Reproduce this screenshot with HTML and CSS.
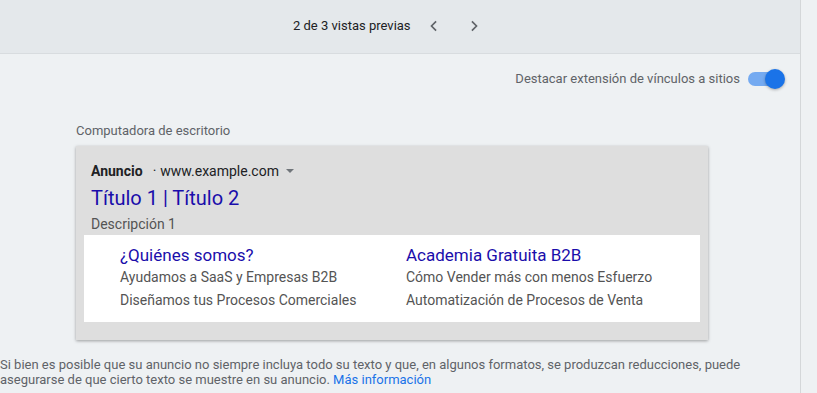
FILE: index.html
```html
<!DOCTYPE html>
<html lang="es">
<head>
  <meta charset="UTF-8" />
  <title>Vista previa del anuncio</title>
  <link rel="stylesheet" href="styles.css">
</head>
<body>
  <div class="main">
    <div class="topbar">
      <span class="pager-text">2 de 3 vistas previas</span>
      <button class="nav-btn" aria-label="Anterior">
        <svg width="20" height="20" viewBox="0 0 24 24"><path d="M14.5 6.5L9 12l5.5 5.5" fill="none" stroke="#5f6368" stroke-width="2"/></svg>
      </button>
      <button class="nav-btn" aria-label="Siguiente">
        <svg width="20" height="20" viewBox="0 0 24 24"><path d="M9.5 6.5L15 12l-5.5 5.5" fill="none" stroke="#5f6368" stroke-width="2"/></svg>
      </button>
    </div>

    <div class="toggle-row">
      <span class="toggle-label">Destacar extensión de vínculos a sitios</span>
      <span class="toggle"><span class="knob"></span></span>
    </div>

    <div class="preview">
      <p class="device">Computadora de escritorio</p>
      <div class="ad-card">
        <div class="ad-head">
          <strong>Anuncio</strong>
          <span class="dot">·</span>
          <span class="url">www.example.com</span>
          <span class="caret"></span>
        </div>
        <a class="ad-title">Título 1 | Título 2</a>
        <p class="ad-desc">Descripción 1</p>
        <div class="sitelinks">
          <div class="sitelink">
            <a class="sl-title">¿Quiénes somos?</a>
            <p>Ayudamos a SaaS y Empresas B2B</p>
            <p>Diseñamos tus Procesos Comerciales</p>
          </div>
          <div class="sitelink">
            <a class="sl-title">Academia Gratuita B2B</a>
            <p>Cómo Vender más con menos Esfuerzo</p>
            <p>Automatización de Procesos de Venta</p>
          </div>
        </div>
      </div>
    </div>

    <p class="disclaimer">Si bien es posible que su anuncio no siempre incluya todo su texto y que, en algunos formatos, se produzcan reducciones, puede asegurarse de que cierto texto se muestre en su anuncio. <a class="more">Más información</a></p>
  </div>
  <div class="side"></div>
</body>
</html>
```

FILE: styles.css
```css
* {
  box-sizing: border-box;
}

body {
  margin: 0;
  font-family: Roboto, 'Liberation Sans', sans-serif;
  background: #eef1f3;
  color: #3c4043;
  display: flex;
  height: 393px;
  overflow: hidden;
}

p {
  margin: 0;
}

.main {
  width: 801px;
  border-right: 1px solid #d4d7d9;
  flex-shrink: 0;
}

.side {
  flex: 1;
}

.topbar {
  height: 54px;
  background: #e4e8eb;
  border-bottom: 1px solid #d8dcdf;
  display: flex;
  align-items: center;
  padding: 0 0 2px 293px;
}

.pager-text {
  font-size: 13px;
  color: #202124;
  margin-right: 3px;
}

.nav-btn {
  border: none;
  background: none;
  padding: 0;
  width: 40px;
  height: 24px;
  display: flex;
  align-items: center;
  justify-content: center;
}

.toggle-row {
  display: flex;
  justify-content: flex-end;
  align-items: center;
  padding: 13px 16px 0 0;
  height: 36px;
}

.toggle-label {
  font-size: 13px;
  color: #5f6368;
  margin-right: 8px;
}

.toggle {
  position: relative;
  width: 36px;
  height: 14px;
  background: #74aaf1;
  border-radius: 7px;
}

.knob {
  position: absolute;
  right: -1px;
  top: -3px;
  width: 20px;
  height: 20px;
  border-radius: 50%;
  background: #1a73e8;
  box-shadow: 0 1px 3px rgba(0, 0, 0, 0.3);
}

.preview {
  padding: 33px 0 0 76px;
}

.device {
  font-size: 13px;
  color: #5f6368;
  margin-bottom: 8px;
}

.ad-card {
  width: 632px;
  background: #dedede;
  box-shadow: 0 1px 3px rgba(0, 0, 0, 0.35);
  padding: 17px 8px 18px 8px;
}

.ad-head {
  font-size: 14px;
  color: #202124;
  padding-left: 7px;
  display: flex;
  align-items: center;
}

.ad-head strong {
  font-weight: 700;
}

.dot {
  margin: 0 4px 0 10px;
}

.caret {
  width: 0;
  height: 0;
  border-left: 4px solid transparent;
  border-right: 4px solid transparent;
  border-top: 4px solid #70757a;
  margin-left: 7px;
}

.ad-title {
  display: block;
  font-size: 20px;
  color: #1a0dab;
  padding-left: 7px;
  margin-top: 7px;
}

.ad-desc {
  font-size: 14px;
  color: #545454;
  padding-left: 7px;
  margin-top: 6px;
}

.sitelinks {
  background: #fff;
  margin-top: 3px;
  padding: 9px 0 10px 36px;
  display: grid;
  grid-template-columns: 286px 1fr;
}

.sl-title {
  display: block;
  font-size: 17px;
  color: #1a0dab;
  line-height: 22px;
}

.sitelink p {
  font-size: 14px;
  color: #545454;
  line-height: 23px;
}

.disclaimer {
  margin-top: 17px;
  font-size: 13px;
  line-height: 15px;
  color: #5f6368;
  padding-right: 10px;
}

.more {
  color: #1a73e8;
}
```
